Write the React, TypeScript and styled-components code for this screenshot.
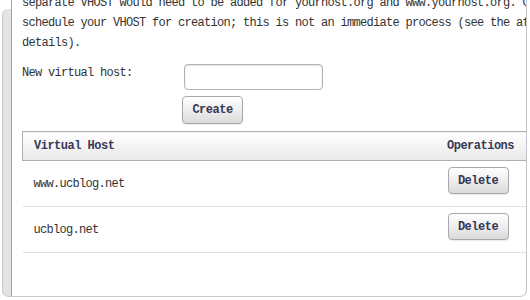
import React, { useState } from 'react';
import styled, { createGlobalStyle } from 'styled-components';

const GlobalStyle = createGlobalStyle`
    html, body {
        margin: 0;
        padding: 0;
        background: #fff;
    }
    body {
        font-family: "Liberation Mono", "DejaVu Sans Mono", monospace;
        font-size: 12px;
        color: #333;
    }
`;

const Frame = styled.div`
    display: flex;
    width: 530px;
    height: 300px;
    box-sizing: border-box;
    padding: 0 3px 3px 2px;
    overflow: hidden;
`;

const Gutter = styled.div`
    width: 8px;
    margin-top: 9px;
    background: #e4e4e4;
    border-left: 1px solid #c6c6c6;
    border-bottom: 1px solid #c8c8d2;
    border-radius: 6px 0 0 7px;
`;

const Panel = styled.section`
    flex: 1;
    min-width: 0;
    background: #fff;
    border-left: 1px solid #a4a4a4;
    border-right: 1px solid #c4c4ce;
    border-bottom: 1px solid #c8c8d2;
    border-radius: 0 0 7px 0;
    padding: 0 0 0 10px;
    overflow: hidden;
`;

const Intro = styled.p`
    margin: -7px 0 0;
    line-height: 20px;
    letter-spacing: -0.7px;
    white-space: nowrap;
`;

const Form = styled.div`
    display: grid;
    grid-template-columns: 160px auto;
    justify-content: start;
    row-gap: 6px;
    margin-top: 10px;
`;

const Label = styled.label`
    line-height: 20px;
    letter-spacing: -0.7px;
`;

const Input = styled.input`
    width: 139px;
    height: 26px;
    box-sizing: border-box;
    margin: 1px 0 0 2px;
    border: 1px solid #b2b2b2;
    border-radius: 4px;
    box-shadow: inset 0 1px 2px rgba(0, 0, 0, 0.12);
    outline: none;
`;

const Button = styled.button<{ $tall?: boolean }>`
    grid-column: 2;
    width: 61px;
    height: ${p => (p.$tall ? 28 : 27)}px;
    box-sizing: border-box;
    padding: 0;
    border: 1px solid #a9a9a9;
    border-radius: 4px;
    background: linear-gradient(#fefefe, #f0f0f0 45%, #dadada);
    box-shadow: 0 1px 1px rgba(0, 0, 0, 0.08);
    font-family: "Liberation Mono", "DejaVu Sans Mono", monospace;
    font-size: 12px;
    font-weight: bold;
    letter-spacing: -0.5px;
    color: #383857;
    cursor: pointer;
`;

const Table = styled.table`
    width: 508px;
    margin-top: 7px;
    border-collapse: collapse;
`;

const Th = styled.th<{ $center?: boolean }>`
    padding: 4px 10px 4px 11px;
    line-height: 20px;
    text-align: ${p => (p.$center ? 'center' : 'left')};
    font-weight: bold;
    letter-spacing: -0.5px;
    color: #383857;
    background: linear-gradient(#ffffff, #e8e8e8);
    border-top: 1px solid #b0b0b0;
    border-bottom: 1px solid #b0b0b0;
    &:first-child {
        border-left: 1px solid #b0b0b0;
    }
`;

const Tr = styled.tr`
    border-bottom: 1px solid #e0e0e0;
`;

const HostCell = styled.td`
    padding: 13px 10px 12px 11px;
    line-height: 20px;
    letter-spacing: -0.7px;
    vertical-align: top;
`;

const ActionCell = styled.td`
    width: 96px;
    padding: 6px 4px 12px 0;
    text-align: center;
    vertical-align: top;
`;

const App = () => {
    const [hosts, setHosts] = useState(['www.ucblog.net', 'ucblog.net']);
    const [name, setName] = useState('');

    const addHost = () => {
        if (name.trim()) {
            setHosts(prev => [...prev, name.trim()]);
            setName('');
        }
    };

    return (
        <>
            <GlobalStyle />
            <Frame>
                <Gutter />
                <Panel>
                    <Intro>
                        separate VHOST would need to be added for yourhost.org and www.yourhost.org. Clicking Create will
                        <br />
                        schedule your VHOST for creation; this is not an immediate process (see the after-creation
                        <br />
                        details).
                    </Intro>

                    <Form>
                        <Label htmlFor="vhost">New virtual host:</Label>
                        <Input id="vhost" type="text" value={name} onChange={e => setName(e.target.value)} />
                        <Button $tall type="button" onClick={addHost}>
                            Create
                        </Button>
                    </Form>

                    <Table>
                        <thead>
                            <tr>
                                <Th>Virtual Host</Th>
                                <Th $center>Operations</Th>
                            </tr>
                        </thead>
                        <tbody>
                            {hosts.map(host => (
                                <Tr key={host}>
                                    <HostCell>{host}</HostCell>
                                    <ActionCell>
                                        <Button type="button" onClick={() => setHosts(prev => prev.filter(h => h !== host))}>
                                            Delete
                                        </Button>
                                    </ActionCell>
                                </Tr>
                            ))}
                        </tbody>
                    </Table>
                </Panel>
            </Frame>
        </>
    );
};

export default App;
